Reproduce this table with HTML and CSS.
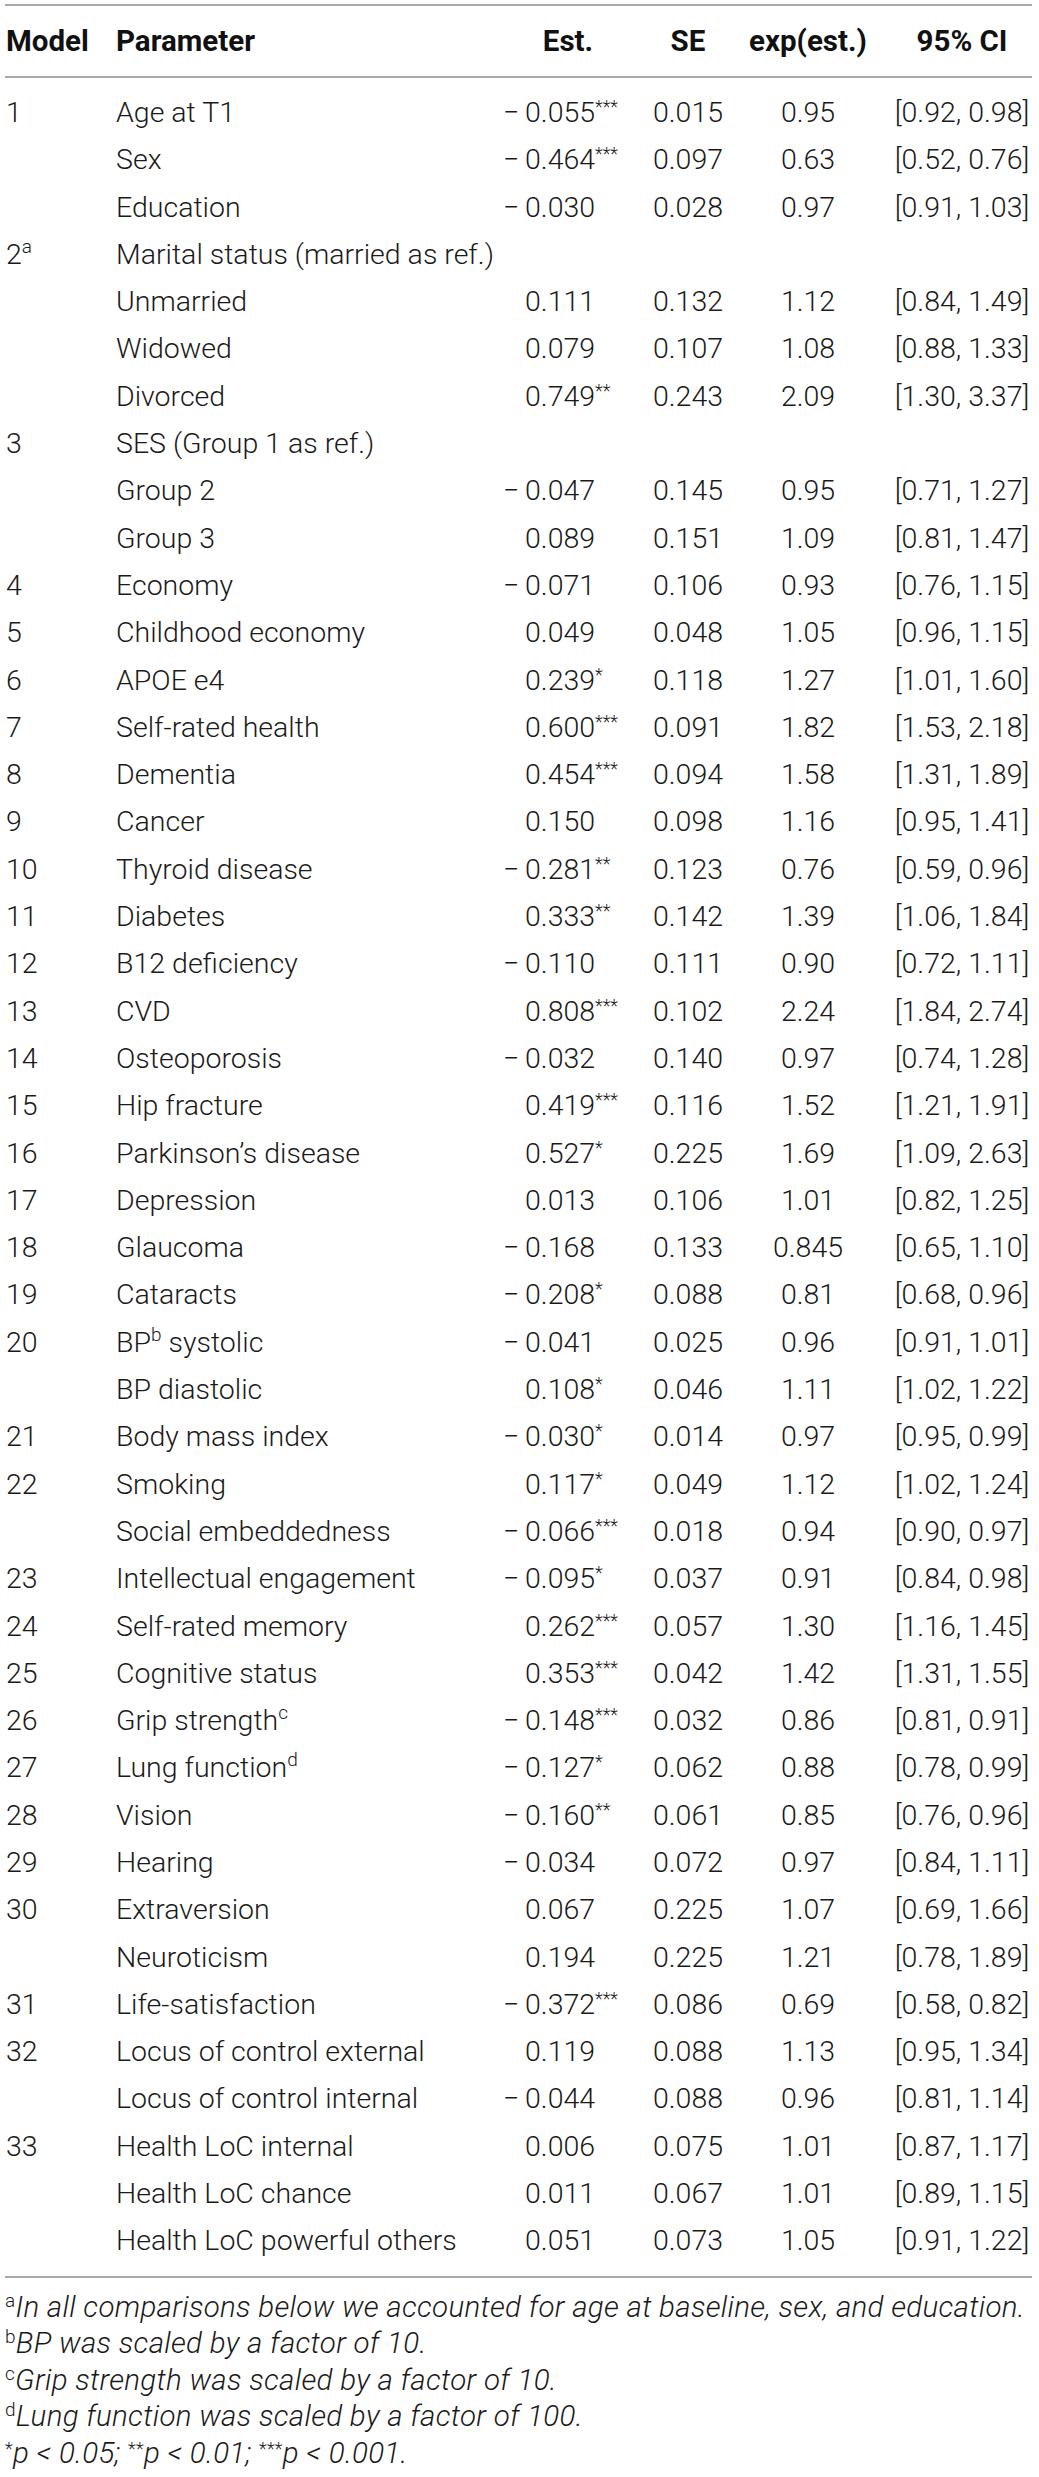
FILE: index.html
```html
<!DOCTYPE html>
<html lang="en">
<head>
<meta charset="utf-8">
<title>Model estimates</title>
<link rel="stylesheet" href="styles.css">
</head>
<body>
<div class="page">
<table class="results">
  <colgroup>
    <col class="c-model"><col class="c-param"><col class="c-est"><col class="c-se"><col class="c-exp"><col class="c-ci">
  </colgroup>
  <thead>
    <tr>
      <th class="model">Model</th>
      <th class="param">Parameter</th>
      <th class="est">Est.</th>
      <th class="se">SE</th>
      <th class="exp">exp(est.)</th>
      <th class="ci">95% CI</th>
    </tr>
  </thead>
  <tbody>
    <tr class="first"><td class="model">1</td><td class="param">Age at T1</td><td class="est"><span class="sign">−</span>0.055<sup class="sig">***</sup></td><td class="se">0.015</td><td class="exp">0.95</td><td class="ci">[0.92, 0.98]</td></tr>
    <tr><td class="model"></td><td class="param">Sex</td><td class="est"><span class="sign">−</span>0.464<sup class="sig">***</sup></td><td class="se">0.097</td><td class="exp">0.63</td><td class="ci">[0.52, 0.76]</td></tr>
    <tr><td class="model"></td><td class="param">Education</td><td class="est"><span class="sign">−</span>0.030</td><td class="se">0.028</td><td class="exp">0.97</td><td class="ci">[0.91, 1.03]</td></tr>
    <tr><td class="model">2<sup class="note">a</sup></td><td class="param">Marital status (married as ref.)</td><td class="est"></td><td class="se"></td><td class="exp"></td><td class="ci"></td></tr>
    <tr><td class="model"></td><td class="param">Unmarried</td><td class="est"><span class="sign"></span>0.111</td><td class="se">0.132</td><td class="exp">1.12</td><td class="ci">[0.84, 1.49]</td></tr>
    <tr><td class="model"></td><td class="param">Widowed</td><td class="est"><span class="sign"></span>0.079</td><td class="se">0.107</td><td class="exp">1.08</td><td class="ci">[0.88, 1.33]</td></tr>
    <tr><td class="model"></td><td class="param">Divorced</td><td class="est"><span class="sign"></span>0.749<sup class="sig">**</sup></td><td class="se">0.243</td><td class="exp">2.09</td><td class="ci">[1.30, 3.37]</td></tr>
    <tr><td class="model">3</td><td class="param">SES (Group 1 as ref.)</td><td class="est"></td><td class="se"></td><td class="exp"></td><td class="ci"></td></tr>
    <tr><td class="model"></td><td class="param">Group 2</td><td class="est"><span class="sign">−</span>0.047</td><td class="se">0.145</td><td class="exp">0.95</td><td class="ci">[0.71, 1.27]</td></tr>
    <tr><td class="model"></td><td class="param">Group 3</td><td class="est"><span class="sign"></span>0.089</td><td class="se">0.151</td><td class="exp">1.09</td><td class="ci">[0.81, 1.47]</td></tr>
    <tr><td class="model">4</td><td class="param">Economy</td><td class="est"><span class="sign">−</span>0.071</td><td class="se">0.106</td><td class="exp">0.93</td><td class="ci">[0.76, 1.15]</td></tr>
    <tr><td class="model">5</td><td class="param">Childhood economy</td><td class="est"><span class="sign"></span>0.049</td><td class="se">0.048</td><td class="exp">1.05</td><td class="ci">[0.96, 1.15]</td></tr>
    <tr><td class="model">6</td><td class="param">APOE e4</td><td class="est"><span class="sign"></span>0.239<sup class="sig">*</sup></td><td class="se">0.118</td><td class="exp">1.27</td><td class="ci">[1.01, 1.60]</td></tr>
    <tr><td class="model">7</td><td class="param">Self-rated health</td><td class="est"><span class="sign"></span>0.600<sup class="sig">***</sup></td><td class="se">0.091</td><td class="exp">1.82</td><td class="ci">[1.53, 2.18]</td></tr>
    <tr><td class="model">8</td><td class="param">Dementia</td><td class="est"><span class="sign"></span>0.454<sup class="sig">***</sup></td><td class="se">0.094</td><td class="exp">1.58</td><td class="ci">[1.31, 1.89]</td></tr>
    <tr><td class="model">9</td><td class="param">Cancer</td><td class="est"><span class="sign"></span>0.150</td><td class="se">0.098</td><td class="exp">1.16</td><td class="ci">[0.95, 1.41]</td></tr>
    <tr><td class="model">10</td><td class="param">Thyroid disease</td><td class="est"><span class="sign">−</span>0.281<sup class="sig">**</sup></td><td class="se">0.123</td><td class="exp">0.76</td><td class="ci">[0.59, 0.96]</td></tr>
    <tr><td class="model">11</td><td class="param">Diabetes</td><td class="est"><span class="sign"></span>0.333<sup class="sig">**</sup></td><td class="se">0.142</td><td class="exp">1.39</td><td class="ci">[1.06, 1.84]</td></tr>
    <tr><td class="model">12</td><td class="param">B12 deficiency</td><td class="est"><span class="sign">−</span>0.110</td><td class="se">0.111</td><td class="exp">0.90</td><td class="ci">[0.72, 1.11]</td></tr>
    <tr><td class="model">13</td><td class="param">CVD</td><td class="est"><span class="sign"></span>0.808<sup class="sig">***</sup></td><td class="se">0.102</td><td class="exp">2.24</td><td class="ci">[1.84, 2.74]</td></tr>
    <tr><td class="model">14</td><td class="param">Osteoporosis</td><td class="est"><span class="sign">−</span>0.032</td><td class="se">0.140</td><td class="exp">0.97</td><td class="ci">[0.74, 1.28]</td></tr>
    <tr><td class="model">15</td><td class="param">Hip fracture</td><td class="est"><span class="sign"></span>0.419<sup class="sig">***</sup></td><td class="se">0.116</td><td class="exp">1.52</td><td class="ci">[1.21, 1.91]</td></tr>
    <tr><td class="model">16</td><td class="param">Parkinson’s disease</td><td class="est"><span class="sign"></span>0.527<sup class="sig">*</sup></td><td class="se">0.225</td><td class="exp">1.69</td><td class="ci">[1.09, 2.63]</td></tr>
    <tr><td class="model">17</td><td class="param">Depression</td><td class="est"><span class="sign"></span>0.013</td><td class="se">0.106</td><td class="exp">1.01</td><td class="ci">[0.82, 1.25]</td></tr>
    <tr><td class="model">18</td><td class="param">Glaucoma</td><td class="est"><span class="sign">−</span>0.168</td><td class="se">0.133</td><td class="exp">0.845</td><td class="ci">[0.65, 1.10]</td></tr>
    <tr><td class="model">19</td><td class="param">Cataracts</td><td class="est"><span class="sign">−</span>0.208<sup class="sig">*</sup></td><td class="se">0.088</td><td class="exp">0.81</td><td class="ci">[0.68, 0.96]</td></tr>
    <tr><td class="model">20</td><td class="param">BP<sup class="note">b</sup> systolic</td><td class="est"><span class="sign">−</span>0.041</td><td class="se">0.025</td><td class="exp">0.96</td><td class="ci">[0.91, 1.01]</td></tr>
    <tr><td class="model"></td><td class="param">BP diastolic</td><td class="est"><span class="sign"></span>0.108<sup class="sig">*</sup></td><td class="se">0.046</td><td class="exp">1.11</td><td class="ci">[1.02, 1.22]</td></tr>
    <tr><td class="model">21</td><td class="param">Body mass index</td><td class="est"><span class="sign">−</span>0.030<sup class="sig">*</sup></td><td class="se">0.014</td><td class="exp">0.97</td><td class="ci">[0.95, 0.99]</td></tr>
    <tr><td class="model">22</td><td class="param">Smoking</td><td class="est"><span class="sign"></span>0.117<sup class="sig">*</sup></td><td class="se">0.049</td><td class="exp">1.12</td><td class="ci">[1.02, 1.24]</td></tr>
    <tr><td class="model"></td><td class="param">Social embeddedness</td><td class="est"><span class="sign">−</span>0.066<sup class="sig">***</sup></td><td class="se">0.018</td><td class="exp">0.94</td><td class="ci">[0.90, 0.97]</td></tr>
    <tr><td class="model">23</td><td class="param">Intellectual engagement</td><td class="est"><span class="sign">−</span>0.095<sup class="sig">*</sup></td><td class="se">0.037</td><td class="exp">0.91</td><td class="ci">[0.84, 0.98]</td></tr>
    <tr><td class="model">24</td><td class="param">Self-rated memory</td><td class="est"><span class="sign"></span>0.262<sup class="sig">***</sup></td><td class="se">0.057</td><td class="exp">1.30</td><td class="ci">[1.16, 1.45]</td></tr>
    <tr><td class="model">25</td><td class="param">Cognitive status</td><td class="est"><span class="sign"></span>0.353<sup class="sig">***</sup></td><td class="se">0.042</td><td class="exp">1.42</td><td class="ci">[1.31, 1.55]</td></tr>
    <tr><td class="model">26</td><td class="param">Grip strength<sup class="note">c</sup></td><td class="est"><span class="sign">−</span>0.148<sup class="sig">***</sup></td><td class="se">0.032</td><td class="exp">0.86</td><td class="ci">[0.81, 0.91]</td></tr>
    <tr><td class="model">27</td><td class="param">Lung function<sup class="note">d</sup></td><td class="est"><span class="sign">−</span>0.127<sup class="sig">*</sup></td><td class="se">0.062</td><td class="exp">0.88</td><td class="ci">[0.78, 0.99]</td></tr>
    <tr><td class="model">28</td><td class="param">Vision</td><td class="est"><span class="sign">−</span>0.160<sup class="sig">**</sup></td><td class="se">0.061</td><td class="exp">0.85</td><td class="ci">[0.76, 0.96]</td></tr>
    <tr><td class="model">29</td><td class="param">Hearing</td><td class="est"><span class="sign">−</span>0.034</td><td class="se">0.072</td><td class="exp">0.97</td><td class="ci">[0.84, 1.11]</td></tr>
    <tr><td class="model">30</td><td class="param">Extraversion</td><td class="est"><span class="sign"></span>0.067</td><td class="se">0.225</td><td class="exp">1.07</td><td class="ci">[0.69, 1.66]</td></tr>
    <tr><td class="model"></td><td class="param">Neuroticism</td><td class="est"><span class="sign"></span>0.194</td><td class="se">0.225</td><td class="exp">1.21</td><td class="ci">[0.78, 1.89]</td></tr>
    <tr><td class="model">31</td><td class="param">Life-satisfaction</td><td class="est"><span class="sign">−</span>0.372<sup class="sig">***</sup></td><td class="se">0.086</td><td class="exp">0.69</td><td class="ci">[0.58, 0.82]</td></tr>
    <tr><td class="model">32</td><td class="param">Locus of control external</td><td class="est"><span class="sign"></span>0.119</td><td class="se">0.088</td><td class="exp">1.13</td><td class="ci">[0.95, 1.34]</td></tr>
    <tr><td class="model"></td><td class="param">Locus of control internal</td><td class="est"><span class="sign">−</span>0.044</td><td class="se">0.088</td><td class="exp">0.96</td><td class="ci">[0.81, 1.14]</td></tr>
    <tr><td class="model">33</td><td class="param">Health LoC internal</td><td class="est"><span class="sign"></span>0.006</td><td class="se">0.075</td><td class="exp">1.01</td><td class="ci">[0.87, 1.17]</td></tr>
    <tr><td class="model"></td><td class="param">Health LoC chance</td><td class="est"><span class="sign"></span>0.011</td><td class="se">0.067</td><td class="exp">1.01</td><td class="ci">[0.89, 1.15]</td></tr>
    <tr class="last"><td class="model"></td><td class="param">Health LoC powerful others</td><td class="est"><span class="sign"></span>0.051</td><td class="se">0.073</td><td class="exp">1.05</td><td class="ci">[0.91, 1.22]</td></tr>
  </tbody>
</table>
<div class="notes">
  <p><sup class="fn">a</sup>In all comparisons below we accounted for age at baseline, sex, and education.</p>
  <p><sup class="fn">b</sup>BP was scaled by a factor of 10.</p>
  <p><sup class="fn">c</sup>Grip strength was scaled by a factor of 10.</p>
  <p><sup class="fn">d</sup>Lung function was scaled by a factor of 100.</p>
  <p><sup class="fn star">*</sup>p &lt; 0.05; <sup class="fn star">**</sup>p &lt; 0.01; <sup class="fn star">***</sup>p &lt; 0.001.</p>
</div>
</div>
</body>
</html>
```
FILE: styles.css
```css
html, body {
  margin: 0;
  padding: 0;
  background: #ffffff;
}

body {
  font-family: Roboto, "Liberation Sans", Arial, sans-serif;
  color: #1a1a1a;
}

.page {
  padding: 4px 0 0 5px;
  width: 1027px;
}

.results {
  width: 1027px;
  table-layout: fixed;
  border-collapse: separate;
  border-spacing: 0;
  border-top: 2px solid #a9a9a9;
}

.c-model { width: 105px; }
.c-param { width: 393px; }
.c-est   { width: 130px; }
.c-se    { width: 110px; }
.c-exp   { width: 149px; }
.c-ci    { width: 140px; }

.results th {
  height: 70px;
  padding: 0;
  font-size: 29.5px;
  font-weight: 700;
  color: #111;
  border-bottom: 2px solid #a9a9a9;
  vertical-align: middle;
  white-space: nowrap;
}

.results td {
  padding: 0;
  font-size: 28.5px;
  font-weight: 300;
  line-height: 47.3px;
  height: 47.3px;
  vertical-align: middle;
  white-space: nowrap;
}

.results .model { text-align: left; padding-left: 1px; }
.results .param { text-align: left; padding-left: 6px; }
.results th.est { text-align: center; }
.results td.est { text-align: left; }
.results .se  { text-align: center; }
.results .exp { text-align: center; padding-right: 19px; }
.results .ci  { text-align: center; }

.results tr.first td { padding-top: 11px; }
.results tr.last td {
  padding-bottom: 11px;
  border-bottom: 2px solid #a9a9a9;
}

.sign {
  display: inline-block;
  width: 22px;
  text-align: left;
}

.sig {
  font-size: 18px;
  line-height: 0;
  vertical-align: 9px;
}

.note {
  font-size: 19px;
  line-height: 0;
  vertical-align: 11px;
}

.notes {
  padding-top: 11px;
  font-size: 29.5px;
  letter-spacing: 0.3px;
  font-weight: 300;
  font-style: italic;
  line-height: 36.5px;
}

.notes p {
  margin: 0;
}

.fn {
  font-style: normal;
  font-size: 19px;
  line-height: 0;
  vertical-align: 10px;
}

.fn.star {
  font-size: 18px;
  vertical-align: 8px;
}
```
